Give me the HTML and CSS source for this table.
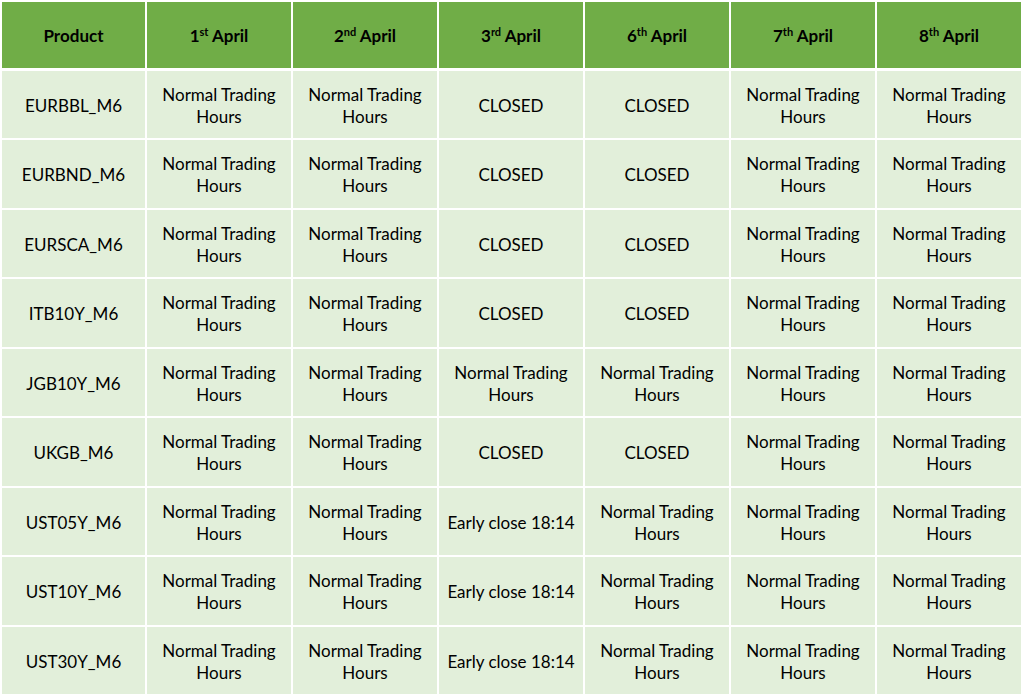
FILE: index.html
```html
<!DOCTYPE html>
<html lang="en">
<head>
<meta charset="utf-8">
<title>Trading Hours</title>
<link rel="stylesheet" href="styles.css">
</head>
<body>
<table class="schedule">
  <colgroup>
    <col class="col-first">
    <col class="col-day"><col class="col-day"><col class="col-day"><col class="col-day"><col class="col-day"><col class="col-day">
  </colgroup>
  <thead>
    <tr>
      <th>Product</th>
      <th>1<sup>st</sup> April</th>
      <th>2<sup>nd</sup> April</th>
      <th>3<sup>rd</sup> April</th>
      <th>6<sup>th</sup> April</th>
      <th>7<sup>th</sup> April</th>
      <th>8<sup>th</sup> April</th>
    </tr>
  </thead>
  <tbody>
    <tr><td>EURBBL_M6</td><td>Normal Trading Hours</td><td>Normal Trading Hours</td><td>CLOSED</td><td>CLOSED</td><td>Normal Trading Hours</td><td>Normal Trading Hours</td></tr>
    <tr><td>EURBND_M6</td><td>Normal Trading Hours</td><td>Normal Trading Hours</td><td>CLOSED</td><td>CLOSED</td><td>Normal Trading Hours</td><td>Normal Trading Hours</td></tr>
    <tr><td>EURSCA_M6</td><td>Normal Trading Hours</td><td>Normal Trading Hours</td><td>CLOSED</td><td>CLOSED</td><td>Normal Trading Hours</td><td>Normal Trading Hours</td></tr>
    <tr><td>ITB10Y_M6</td><td>Normal Trading Hours</td><td>Normal Trading Hours</td><td>CLOSED</td><td>CLOSED</td><td>Normal Trading Hours</td><td>Normal Trading Hours</td></tr>
    <tr><td>JGB10Y_M6</td><td>Normal Trading Hours</td><td>Normal Trading Hours</td><td>Normal Trading Hours</td><td>Normal Trading Hours</td><td>Normal Trading Hours</td><td>Normal Trading Hours</td></tr>
    <tr><td>UKGB_M6</td><td>Normal Trading Hours</td><td>Normal Trading Hours</td><td>CLOSED</td><td>CLOSED</td><td>Normal Trading Hours</td><td>Normal Trading Hours</td></tr>
    <tr><td>UST05Y_M6</td><td>Normal Trading Hours</td><td>Normal Trading Hours</td><td>Early close 18:14</td><td>Normal Trading Hours</td><td>Normal Trading Hours</td><td>Normal Trading Hours</td></tr>
    <tr><td>UST10Y_M6</td><td>Normal Trading Hours</td><td>Normal Trading Hours</td><td>Early close 18:14</td><td>Normal Trading Hours</td><td>Normal Trading Hours</td><td>Normal Trading Hours</td></tr>
    <tr><td>UST30Y_M6</td><td>Normal Trading Hours</td><td>Normal Trading Hours</td><td>Early close 18:14</td><td>Normal Trading Hours</td><td>Normal Trading Hours</td><td>Normal Trading Hours</td></tr>
  </tbody>
</table>
</body>
</html>
```

FILE: styles.css
```css
html, body {
  margin: 0;
  padding: 0;
  background: #ffffff;
}

.schedule {
  border-collapse: separate;
  border-spacing: 2px;
  table-layout: fixed;
  width: 1023px;
  font-family: Lato, "Liberation Sans", sans-serif;
  font-size: 17px;
  color: #000000;
}

.col-first { width: 143px; }
.col-day { width: 144px; }

.schedule th,
.schedule td {
  padding: 2px 5px 0;
  text-align: center;
  vertical-align: middle;
  line-height: 22px;
  box-sizing: border-box;
}

.schedule th {
  background: #70ad47;
  font-weight: 700;
  height: 67px;
  border-bottom: 1px solid #ffffff;
}

.schedule td {
  background: #e2efda;
  font-weight: 400;
  height: 67px;
}

.schedule tbody tr:nth-child(even) td {
  height: 68px;
}

.schedule sup {
  font-size: 11px;
  line-height: 0;
  vertical-align: 6px;
}
```
